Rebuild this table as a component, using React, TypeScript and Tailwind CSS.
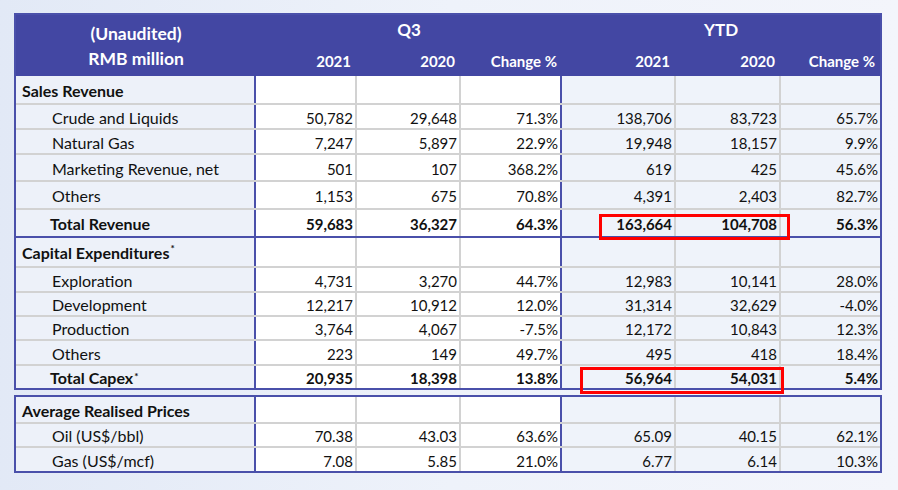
import React from "react"

type Row = {
  label: string
  star?: boolean
  kind: "section" | "item" | "total"
  vals: string[]
  h: string
  line: string
}

const grey = "border-[#d2d2d2]"

const table1: Row[] = [
  { label: "Sales Revenue", kind: "section", vals: ["", "", "", "", "", ""], h: "h-[29px]", line: "border-b-2 border-[#d2d2d2]" },
  { label: "Crude and Liquids", kind: "item", vals: ["50,782", "29,648", "71.3%", "138,706", "83,723", "65.7%"], h: "h-[25px]", line: "border-b-2 border-[#d2d2d2]" },
  { label: "Natural Gas", kind: "item", vals: ["7,247", "5,897", "22.9%", "19,948", "18,157", "9.9%"], h: "h-[25px]", line: "border-b-2 border-[#d2d2d2]" },
  { label: "Marketing Revenue, net", kind: "item", vals: ["501", "107", "368.2%", "619", "425", "45.6%"], h: "h-[27px]", line: "border-b-2 border-[#d2d2d2]" },
  { label: "Others", kind: "item", vals: ["1,153", "675", "70.8%", "4,391", "2,403", "82.7%"], h: "h-[28px]", line: "border-b-2 border-[#d2d2d2]" },
  { label: "Total Revenue", kind: "total", vals: ["59,683", "36,327", "64.3%", "163,664", "104,708", "56.3%"], h: "h-[28px]", line: "border-b-2 border-[#4a50aa]" },
  { label: "Capital Expenditures", star: true, kind: "section", vals: ["", "", "", "", "", ""], h: "h-[30px]", line: "border-b-2 border-[#d2d2d2]" },
  { label: "Exploration", kind: "item", vals: ["4,731", "3,270", "44.7%", "12,983", "10,141", "28.0%"], h: "h-[25px]", line: "border-b-2 border-[#d2d2d2]" },
  { label: "Development", kind: "item", vals: ["12,217", "10,912", "12.0%", "31,314", "32,629", "-4.0%"], h: "h-[24px]", line: "border-b-2 border-[#d2d2d2]" },
  { label: "Production", kind: "item", vals: ["3,764", "4,067", "-7.5%", "12,172", "10,843", "12.3%"], h: "h-[24px]", line: "border-b-2 border-[#d2d2d2]" },
  { label: "Others", kind: "item", vals: ["223", "149", "49.7%", "495", "418", "18.4%"], h: "h-[25px]", line: "border-b-2 border-[#d2d2d2]" },
  { label: "Total Capex", star: true, kind: "total", vals: ["20,935", "18,398", "13.8%", "56,964", "54,031", "5.4%"], h: "h-[22px]", line: "" },
]

const table2: Row[] = [
  { label: "Average Realised Prices", kind: "section", vals: ["", "", "", "", "", ""], h: "h-[27px]", line: "border-b-2 border-[#d2d2d2]" },
  { label: "Oil (US$/bbl)", kind: "item", vals: ["70.38", "43.03", "63.6%", "65.09", "40.15", "62.1%"], h: "h-[24px]", line: "border-b-2 border-[#d2d2d2]" },
  { label: "Gas (US$/mcf)", kind: "item", vals: ["7.08", "5.85", "21.0%", "6.77", "6.14", "10.3%"], h: "h-[23px]", line: "" },
]

const cols = "grid grid-rows-1 grid-cols-[240px_101px_104px_101px_114px_105px_99px] leading-[18px]"

const cellBorder = [
  `border-r-2 ${grey} bg-white`,
  `border-r-2 ${grey} bg-white`,
  "border-r-2 border-[#4a50aa] bg-white",
  `border-r-2 ${grey} bg-[#eff3fa]`,
  `border-r-2 ${grey} bg-[#eff3fa]`,
  "bg-[#eff3fa]",
]

function TableRow({ r }: { r: Row }) {
  const labelPad =
    r.kind === "section" ? "pl-[6px] font-bold" : r.kind === "total" ? "pl-[34px] font-bold" : "pl-[36px]"
  const bold = r.kind === "total" ? "font-bold" : ""
  return (
    <div className={`${cols} ${r.h} ${r.line}`}>
      <div className={`flex items-center pt-[2px] text-[16px] bg-[#edf1f9] border-r-2 border-[#4a50aa] ${labelPad}`}>
        {r.label}
        {r.star && <span className="self-start mt-[3px] ml-[1px] text-[10px] leading-none">*</span>}
      </div>
      {r.vals.map((v, i) => (
        <div key={i} className={`flex items-center justify-end pr-[2px] pt-[2px] ${cellBorder[i]} ${bold}`}>
          {v}
        </div>
      ))}
    </div>
  )
}

function Group({ title, w }: { title: string; w: string }) {
  return (
    <div className="flex flex-col">
      <div className="h-[30px] flex items-center justify-center text-[17px]">{title}</div>
      <div className={`h-[31px] grid ${w}`}>
        <div className="flex items-center justify-end pr-[6px] pt-[2px]">2021</div>
        <div className="flex items-center justify-end pr-[6px] pt-[2px]">2020</div>
        <div className="flex items-center justify-end pr-[5px] pt-[2px]">Change %</div>
      </div>
    </div>
  )
}

export default function App() {
  return (
    <div className="relative w-[898px] h-[490px] overflow-hidden bg-gradient-to-r from-[#e2e9f6] via-[#eef2fa] to-[#f3f5fb] font-['Lato',sans-serif] text-[15px] text-[#111111]">
      <div className="pl-[14px] pt-[13px]">
        {/* main table */}
        <div className="w-[868px] border-2 border-[#4a50aa]">
          <div className="flex bg-[#4347a3] text-white font-bold h-[61px]">
            <div className="w-[240px] flex flex-col items-center justify-center leading-[25px] text-[17.5px]">
              <div>(Unaudited)</div>
              <div>RMB million</div>
            </div>
            <Group title="Q3" w="grid-cols-[101px_104px_101px]" />
            <Group title="YTD" w="grid-cols-[114px_105px_99px]" />
          </div>
          {table1.map((r, i) => (
            <TableRow key={i} r={r} />
          ))}
        </div>

        {/* prices */}
        <div className="w-[868px] border-2 border-[#4a50aa] mt-[5px]">
          {table2.map((r, i) => (
            <TableRow key={i} r={r} />
          ))}
        </div>
      </div>

      {/* highlight boxes */}
      <div className="absolute left-[599px] top-[214px] w-[191px] h-[26px] border-[3px] border-[#ff0000]" />
      <div className="absolute left-[580px] top-[367px] w-[204px] h-[27px] border-[3px] border-[#ff0000]" />
    </div>
  )
}
